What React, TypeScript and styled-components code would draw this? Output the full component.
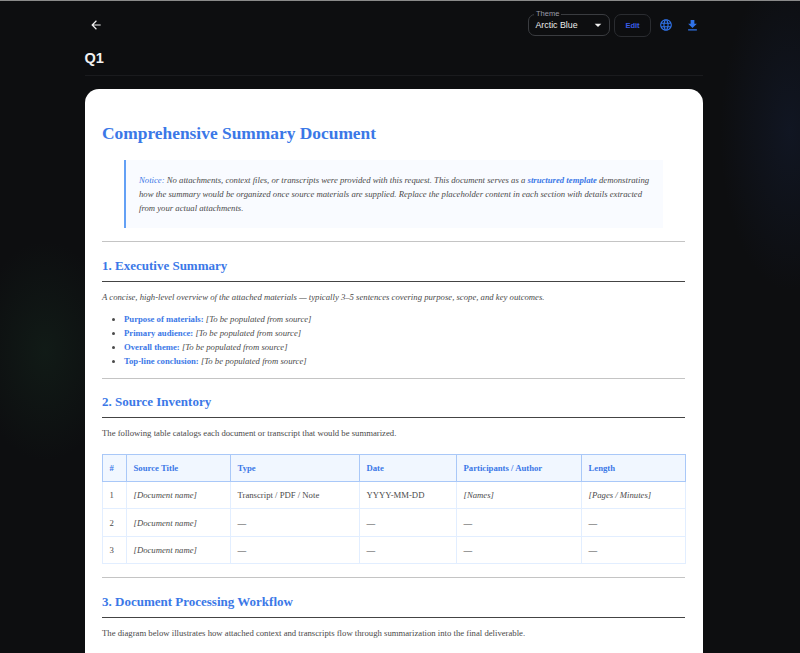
import React from "react";
import styled, { createGlobalStyle } from "styled-components";
import { MdArrowBack, MdFileDownload, MdLanguage, MdArrowDropDown } from "react-icons/md";

const Global = createGlobalStyle`
  html, body { margin: 0; padding: 0; height: 653px; overflow: hidden; background: #0d0e10; }
  * { box-sizing: border-box; }
`;

const highlights = [
  { label: "Purpose of materials:" },
  { label: "Primary audience:" },
  { label: "Overall theme:" },
  { label: "Top-line conclusion:" },
];

const headers = ["#", "Source Title", "Type", "Date", "Participants / Author", "Length"];

const App = () => (
  <Page>
    <Global />
    <Toolbar>
      <IconButton $color="#f2f2f2" $size={14}>
        <MdArrowBack />
      </IconButton>
      <Actions>
        <ThemeField>
          <ThemeLabel>Theme</ThemeLabel>
          <span>Arctic Blue</span>
          <MdArrowDropDown />
        </ThemeField>
        <EditButton>Edit</EditButton>
        <IconGap>
          <IconButton $color="#2f72e8" $size={14}>
            <MdLanguage />
          </IconButton>
          <IconButton $color="#2f72e8" $size={15}>
            <MdFileDownload />
          </IconButton>
        </IconGap>
      </Actions>
    </Toolbar>
    <PageTitle>Q1</PageTitle>
    <Card>
      <DocTitle>Comprehensive Summary Document</DocTitle>
      <Notice>
        <NoticeLead>Notice:</NoticeLead> No attachments, context files, or transcripts were provided with this
        request. This document serves as a <NoticeStrong>structured template</NoticeStrong> demonstrating how the
        summary would be organized once source materials are supplied. Replace the placeholder content in each
        section with details extracted from your actual attachments.
      </Notice>
      <Rule />
      <Heading>1. Executive Summary</Heading>
      <Intro>
        A concise, high-level overview of the attached materials — typically 3–5 sentences covering purpose, scope,
        and key outcomes.
      </Intro>
      <Bullets>
        {highlights.map((item) => (
          <li key={item.label}>
            <strong>{item.label}</strong> <em>[To be populated from source]</em>
          </li>
        ))}
      </Bullets>
      <Rule />
      <Heading $compact>2. Source Inventory</Heading>
      <Para>The following table catalogs each document or transcript that would be summarized.</Para>
      <Table>
        <colgroup>
          <col style={{ width: 24 }} />
          <col style={{ width: 104 }} />
          <col style={{ width: 129 }} />
          <col style={{ width: 97 }} />
          <col style={{ width: 125 }} />
          <col style={{ width: 104 }} />
        </colgroup>
        <thead>
          <tr>
            {headers.map((h) => (
              <th key={h}>{h}</th>
            ))}
          </tr>
        </thead>
        <tbody>
          <tr>
            <td>1</td>
            <td><em>[Document name]</em></td>
            <td>Transcript / PDF / Note</td>
            <td>YYYY-MM-DD</td>
            <td><em>[Names]</em></td>
            <td><em>[Pages / Minutes]</em></td>
          </tr>
          {[2, 3].map((n) => (
            <tr key={n}>
              <td>{n}</td>
              <td><em>[Document name]</em></td>
              <td>—</td>
              <td>—</td>
              <td>—</td>
              <td>—</td>
            </tr>
          ))}
        </tbody>
      </Table>
      <Rule />
      <Heading>3. Document Processing Workflow</Heading>
      <Para>The diagram below illustrates how attached context and transcripts flow through summarization into the final deliverable.</Para>
    </Card>
  </Page>
);

export default App;

const Page = styled.div`
  width: 800px;
  height: 653px;
  overflow: hidden;
  padding: 0 97px 0 84.5px;
  border-top: 1px solid #8a8a8a;
  background:
    radial-gradient(ellipse 70px 110px at 45px 350px, rgba(30, 70, 45, 0.22), transparent),
    radial-gradient(ellipse 70px 160px at 790px 130px, rgba(30, 50, 100, 0.22), transparent),
    #0d0e10;
`;

const Toolbar = styled.div`
  height: 40px;
  padding-top: 13px;
  display: flex;
  align-items: flex-start;
  justify-content: space-between;
`;

const Actions = styled.div`
  display: flex;
  align-items: flex-start;
`;

const IconGap = styled.div`
  display: flex;
  gap: 4px;
`;

const IconButton = styled.span<{ $color: string; $size: number }>`
  width: 22px;
  height: 22px;
  display: flex;
  align-items: center;
  justify-content: center;
  color: ${(p) => p.$color};
  font-size: ${(p) => p.$size}px;
`;

const ThemeField = styled.div`
  position: relative;
  width: 82px;
  height: 22px;
  margin-right: 4px;
  padding: 0 3px 0 6.5px;
  display: flex;
  align-items: center;
  justify-content: space-between;
  border: 1px solid #3a3c40;
  border-radius: 7px;
  color: #ededed;
  font: 8.8px "Liberation Sans", sans-serif;
  svg {
    font-size: 16px;
    color: #f0f0f0;
  }
`;

const ThemeLabel = styled.span`
  position: absolute;
  top: -5px;
  left: 5px;
  padding: 0 2px;
  background: #0d0e10;
  color: #9a9ca8;
  font-size: 7.5px;
  line-height: 8px;
`;

const EditButton = styled.div`
  width: 37px;
  height: 23px;
  margin-right: 4px;
  display: flex;
  align-items: center;
  justify-content: center;
  border: 1px solid #2a2c30;
  border-radius: 7px;
  color: #3a5ce8;
  font: 700 7.5px "Liberation Sans", sans-serif;
`;

const PageTitle = styled.div`
  height: 35px;
  padding-top: 7px;
  border-bottom: 1px solid #1a1b1e;
  color: #f2f2f2;
  font: 700 14.5px/20px "Liberation Sans", sans-serif;
`;

const Card = styled.div`
  height: 700px;
  margin-top: 13px;
  padding: 33px 18px 0 17.5px;
  background: #fff;
  border-radius: 14px 14px 0 0;
  color: #4a4a4a;
  font: 8.7px/14px "Liberation Serif", serif;
`;

const DocTitle = styled.h1`
  margin: 0;
  color: #3b78e7;
  font: 700 17.4px/22px "Liberation Serif", serif;
`;

const Notice = styled.div`
  height: 68px;
  margin: 16px 22px 13px 22px;
  padding: 13px 9px 0 13px;
  background: #f9fbff;
  border-left: 2px solid #63a0f5;
  font-style: italic;
`;

const NoticeLead = styled.em`
  color: #3b78e7;
`;

const NoticeStrong = styled.strong`
  color: #3b78e7;
`;

const Rule = styled.hr`
  height: 1px;
  margin: 0;
  border: 0;
  background: #c4c4c4;
`;

const Heading = styled.h2<{ $compact?: boolean }>`
  height: ${(p) => (p.$compact ? 39 : 40)}px;
  margin: 0 0 8px;
  padding-top: ${(p) => (p.$compact ? 13 : 14)}px;
  border-bottom: 1px solid #444;
  color: #3b78e7;
  font: 700 13px/20px "Liberation Serif", serif;
`;

const Intro = styled.p`
  margin: 0 0 8px;
  font-style: italic;
`;

const Para = styled.p`
  margin: 0 0 14px;
`;

const Bullets = styled.ul`
  margin: 0 0 10px;
  padding-left: 22px;
  strong {
    color: #3b78e7;
  }
`;

const Table = styled.table`
  width: 583px;
  margin-bottom: 13px;
  table-layout: fixed;
  border-collapse: collapse;
  th {
    height: 27px;
    padding: 0 6.5px;
    text-align: left;
    background: #f1f7ff;
    border: 1px solid #a9c8f8;
    color: #3b78e7;
  }
  td {
    height: 27.4px;
    padding: 0 6.5px;
    border: 1px solid #e2eeff;
  }
`;
